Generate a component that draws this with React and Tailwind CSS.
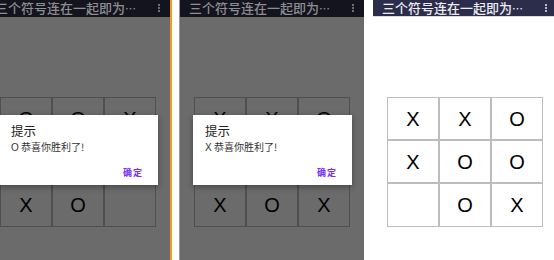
const boards = [
  { cells: ["O", "O", "X", "X", "O", "X", "X", "O", ""], winner: "O", dim: true },
  { cells: ["X", "X", "O", "O", "X", "O", "X", "O", "X"], winner: "X", dim: true },
  { cells: ["X", "X", "O", "X", "O", "O", "", "O", "X"], winner: null, dim: false },
];

function Header({ dim }) {
  const dot = `w-[2px] h-[2px] rounded-full ${dim ? "bg-[#8e8e94]" : "bg-[#ececf2]"}`;
  return (
    <div
      className={`h-[17px] flex items-start pl-[9px] pr-[10px] overflow-hidden ${dim ? "bg-[#14141f]" : "bg-[#2c2c4b] border-b border-[#dcdce0]"}`}
    >
      <span
        className={`shrink-0 text-[13px] leading-[15px] font-medium whitespace-nowrap ${dim ? "text-[#8e8e94]" : "text-[#ececf2]"}`}
      >
        三个符号连在一起即为<span className="text-[11px]">…</span>
      </span>
      <div className="ml-auto shrink-0 mt-[4px] flex flex-col gap-[1px]">
        <span className={dot} />
        <span className={dot} />
        <span className={dot} />
      </div>
    </div>
  );
}

function Board({ cells, dim }) {
  return (
    <div className="grid grid-cols-[52px_52px_52px] grid-rows-[43px_43px_44px] w-[156px]">
      {cells.map((c, i) => (
        <div
          key={i}
          className={`flex items-center justify-center border text-[20px] text-black ${dim ? "bg-[#6b6b6b] border-[#4f4f4f]" : "bg-white border-[#bdbdbd]"}`}
          style={{ fontFamily: "'Liberation Sans', Arial, sans-serif" }}
        >
          {c}
        </div>
      ))}
    </div>
  );
}

function Dialog({ winner }) {
  return (
    <div className="absolute left-[13px] top-[115px] w-[159px] h-[70px] bg-white shadow-[0_2px_6px_rgba(0,0,0,0.35)] px-[12px] pt-[7px] flex flex-col">
      <div className="text-[12.5px] leading-[18px] text-[#222]">提示</div>
      <div className="text-[10px] leading-[14px] text-[#333]">
        <span style={{ fontFamily: "'Liberation Sans', sans-serif" }}>{winner}</span> 恭喜你胜利了!
      </div>
      <div className="mt-auto mb-[6px] self-end mr-[3px] text-[9px] font-bold tracking-[1px] text-[#7b2ff0]">确定</div>
    </div>
  );
}

function Phone({ board }) {
  return (
    <div
      className={`relative w-[184px] h-[260px] shrink-0 ${board.dim ? "bg-[#6b6b6b]" : "bg-white"}`}
      style={{ fontFamily: "'Noto Sans CJK SC', sans-serif" }}
    >
      <Header dim={board.dim} />
      <div className="pl-[14px] pt-[80px]">
        <Board cells={board.cells} dim={board.dim} />
      </div>
      {board.winner && <Dialog winner={board.winner} />}
    </div>
  );
}

export default function App() {
  return (
    <div className="w-[554px] h-[260px] flex bg-white overflow-hidden">
      <div className="w-[172px] shrink-0 overflow-hidden flex justify-end border-r-2 border-[#f39c1f]">
        <div className="shrink-0">
          <Phone board={boards[0]} />
        </div>
      </div>
      <div className="w-[7px] shrink-0 bg-white" />
      <div className="w-[1px] shrink-0 bg-[#9a9a9a]" />
      <Phone board={boards[1]} />
      <div className="w-[9px] shrink-0 bg-white" />
      <div className="w-[181px] shrink-0 overflow-hidden">
        <Phone board={boards[2]} />
      </div>
    </div>
  );
}
